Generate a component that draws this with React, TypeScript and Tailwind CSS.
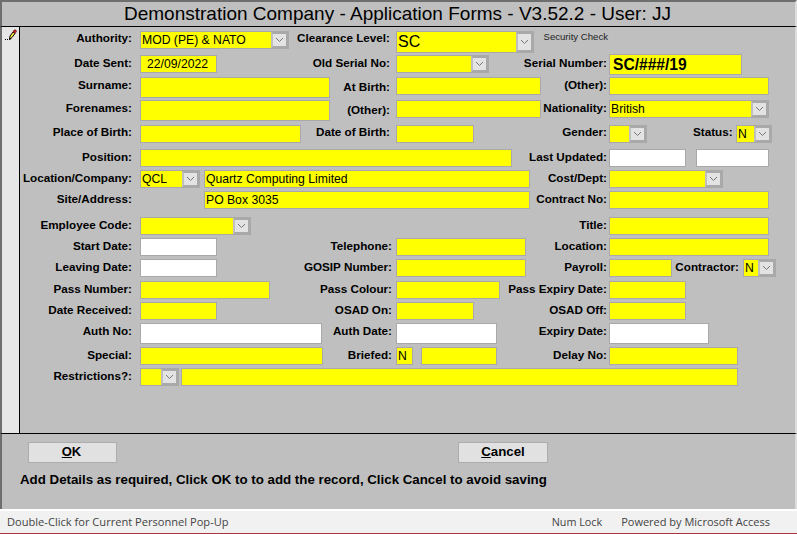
import type { ReactNode } from "react";

const font = "font-['Liberation_Sans',Arial,sans-serif]";

function Label({ children, className = "" }: { children: ReactNode; className?: string }) {
  return <div className={`whitespace-nowrap text-right text-[11.7px] leading-[14px] font-bold text-black ${className}`}>{children}</div>;
}

function Box({ className = "", white, children }: { className?: string; white?: boolean; children?: ReactNode }) {
  return (
    <div className={`shrink-0 overflow-hidden whitespace-nowrap border border-[#a9a9a9] pl-px leading-[16px] text-black ${white ? "bg-white" : "bg-[#ffff00]"} ${className}`}>
      {children}
    </div>
  );
}

function Field({ className = "", white, children }: { className?: string; white?: boolean; children?: ReactNode }) {
  return <Box white={white} className={`text-[12.2px] ${className}`}>{children}</Box>;
}

function Combo({ className = "", big, children }: { className?: string; big?: boolean; children?: ReactNode }) {
  return (
    <div className={`flex shrink-0 border border-[#a9a9a9] bg-[#ffff00] ${big ? "h-[22px]" : "h-[18px]"} ${className}`}>
      <div className={`min-w-0 flex-1 overflow-hidden whitespace-nowrap pl-px text-black ${big ? "text-[16px] leading-[19px]" : "text-[12.2px] leading-[16px]"}`}>{children}</div>
      <div className="flex w-[17px] shrink-0 items-center justify-center border-2 border-r-[#a9a9a9] border-y-[#a9a9a9] border-l-[#bfbfbf] bg-[#e3e3e3]">
        <svg width="9" height="6" viewBox="0 0 9 6" fill="none" stroke="#777" strokeWidth="1">
          <path d="M1 1l3.500 3.500L8 1" />
        </svg>
      </div>
    </div>
  );
}

function Row({ className, children }: { className: string; children: ReactNode }) {
  return <div className={`grid grid-cols-[120px_256px_213px_1fr] ${className}`}>{children}</div>;
}

// field on the left of a track, next column's label on the right
function Track({ className = "", children }: { className?: string; children: ReactNode }) {
  return <div className={`flex items-start justify-between ${className}`}>{children}</div>;
}

function Pencil() {
  return (
    <svg width="12" height="13" viewBox="0 0 12 13" className="mt-[2px] ml-[3px]">
      <rect x="0" y="10" width="1" height="1" fill="#000" />
      <rect x="2" y="10" width="1" height="1" fill="#000" />
      <path d="M4.500 10.500l.5-3.500 3-4 2 1.500-3 4z" fill="#f5e642" stroke="#000" strokeWidth="1" />
      <path d="M4 11l1-2 1.500 1z" fill="#000" />
      <path d="M8 3l1-2h2l.5 1.500-1.500 2z" fill="#d81e1e" stroke="#401010" strokeWidth=".6" />
    </svg>
  );
}

export default function App() {
  return (
    <div className={`flex h-[534px] w-[797px] flex-col overflow-hidden bg-[#bfbfbf] ${font}`}>
      <div className="flex h-[27px] shrink-0 items-center justify-center border-t-2 border-r-2 border-b border-l-2 border-t-[#6e6e6e] border-r-[#dcdcdc] border-b-black border-l-[#6e6e6e] pr-[2px] pb-px text-[19px] leading-[24px] text-black">
        Demonstration Company - Application Forms - V3.52.2 - User: JJ
      </div>
      <div className="flex h-[406px] shrink-0 border-r-2 border-l-2 border-r-[#dcdcdc] border-l-[#6e6e6e]">
        <div className="w-[18px] shrink-0 border-r border-r-black bg-[#e6e6e6]">
          <Pencil />
        </div>
        <div className="min-w-0 flex-1 pt-[4px]">
          <Row className="h-[23px]">
            <Label className="pr-[8px]">Authority:</Label>
            <Track>
              <Combo className="w-[149px]">MOD (PE) &amp; NATO</Combo>
              <Label className="pr-[6px]">Clearance Level:</Label>
            </Track>
            <Track>
              <Combo big className="w-[138px]">SC</Combo>
              <div className="pr-[1px] text-[9.6px] leading-[11px] text-[#222]">Security Check</div>
            </Track>
          </Row>
          <Row className="h-[23px]">
            <Label className="pr-[8px] pt-[2px]">Date Sent:</Label>
            <Track>
              <Field className="mt-px h-[18px] w-[77px]"><span className="ml-[5px]">22/09/2022</span></Field>
              <Label className="pr-[6px] pt-[2px]">Old Serial No:</Label>
            </Track>
            <Track>
              <Combo className="mt-px w-[93px]" />
              <Label className="pr-[2px] pt-[2px]">Serial Number:</Label>
            </Track>
            <Box className="h-[21px] w-[133px] text-[15.6px] font-bold"><span className="ml-[2px] leading-[20px]">SC/###/19</span></Box>
          </Row>
          <Row className="h-[23px]">
            <Label className="pr-[8px] pt-[1px]">Surname:</Label>
            <Track>
              <Field className="h-[21px] w-[190px]" />
              <Label className="pr-[6px] pt-[3px]">At Birth:</Label>
            </Track>
            <Track>
              <Field className="h-[18px] w-[145px]" />
              <Label className="pr-[2px] pt-[1px]">(Other):</Label>
            </Track>
            <Field className="h-[18px] w-[160px]" />
          </Row>
          <Row className="h-[25px]">
            <Label className="pr-[8px] pt-[1px]">Forenames:</Label>
            <Track>
              <Field className="h-[21px] w-[190px]" />
              <Label className="pr-[6px] pt-[3px]">(Other):</Label>
            </Track>
            <Track>
              <Field className="h-[18px] w-[145px]" />
              <Label className="pr-[2px] pt-[1px]">Nationality:</Label>
            </Track>
            <Combo className="w-[160px]">British</Combo>
          </Row>
          <Row className="h-[24px]">
            <Label className="pr-[8px]">Place of Birth:</Label>
            <Track>
              <Field className="h-[18px] w-[161px]" />
              <Label className="pr-[6px]">Date of Birth:</Label>
            </Track>
            <Track>
              <Field className="h-[18px] w-[78px]" />
              <Label className="pr-[2px]">Gender:</Label>
            </Track>
            <div className="flex items-start">
              <Combo className="w-[38px]" />
              <Label className="ml-[46px] w-[38px]">Status:</Label>
              <Combo className="ml-[5px] w-[36px]">N</Combo>
            </div>
          </Row>
          <Row className="h-[21px]">
            <Label className="pr-[8px] pt-[1px]">Position:</Label>
            <Track className="col-span-2">
              <Field className="h-[18px] w-[372px]" />
              <Label className="pr-[2px] pt-[1px]">Last Updated:</Label>
            </Track>
            <div className="flex gap-[10px]">
              <Field white className="h-[18px] w-[77px]" />
              <Field white className="h-[18px] w-[73px]" />
            </div>
          </Row>
          <Row className="h-[21px]">
            <Label className="pr-[8px] pt-[1px]">Location/Company:</Label>
            <Track className="col-span-2">
              <div className="flex gap-[4px]">
                <Combo className="w-[60px]">QCL</Combo>
                <Field className="h-[18px] w-[326px]">Quartz Computing Limited</Field>
              </div>
              <Label className="pr-[2px] pt-[1px]">Cost/Dept:</Label>
            </Track>
            <Combo className="w-[114px]" />
          </Row>
          <Row className="h-[26px]">
            <Label className="pr-[8px] pt-[1px]">Site/Address:</Label>
            <Track className="col-span-2">
              <Field className="ml-[64px] h-[18px] w-[326px]">PO Box 3035</Field>
              <Label className="pr-[2px] pt-[1px]">Contract No:</Label>
            </Track>
            <Field className="h-[18px] w-[160px]" />
          </Row>
          <Row className="h-[21px]">
            <Label className="pr-[8px] pt-[1px]">Employee Code:</Label>
            <Track className="col-span-2">
              <Combo className="w-[111px]" />
              <Label className="pr-[2px] pt-[1px]">Title:</Label>
            </Track>
            <Field className="h-[18px] w-[160px]" />
          </Row>
          <Row className="h-[21px]">
            <Label className="pr-[8px] pt-[1px]">Start Date:</Label>
            <Track>
              <Field white className="h-[18px] w-[77px]" />
              <Label className="pr-[4px] pt-[1px]">Telephone:</Label>
            </Track>
            <Track>
              <Field className="h-[18px] w-[130px]" />
              <Label className="pr-[2px] pt-[1px]">Location:</Label>
            </Track>
            <Field className="h-[18px] w-[160px]" />
          </Row>
          <Row className="h-[22px]">
            <Label className="pr-[8px] pt-[1px]">Leaving Date:</Label>
            <Track>
              <Field white className="h-[18px] w-[77px]" />
              <Label className="pr-[4px] pt-[1px]">GOSIP Number:</Label>
            </Track>
            <Track>
              <Field className="h-[18px] w-[130px]" />
              <Label className="pr-[2px] pt-[1px]">Payroll:</Label>
            </Track>
            <div className="flex items-start">
              <Field className="h-[18px] w-[63px]" />
              <Label className="ml-[2px] w-[65px] pt-[1px]">Contractor:</Label>
              <Combo className="ml-[4px] w-[33px]">N</Combo>
            </div>
          </Row>
          <Row className="h-[21px]">
            <Label className="pr-[8px] pt-[1px]">Pass Number:</Label>
            <Track>
              <Field className="h-[18px] w-[130px]" />
              <Label className="pr-[4px] pt-[1px]">Pass Colour:</Label>
            </Track>
            <Track>
              <Field className="h-[18px] w-[104px]" />
              <Label className="pr-[2px] pt-[1px]">Pass Expiry Date:</Label>
            </Track>
            <Field className="h-[18px] w-[77px]" />
          </Row>
          <Row className="h-[21px]">
            <Label className="pr-[8px] pt-[1px]">Date Received:</Label>
            <Track>
              <Field className="h-[18px] w-[77px]" />
              <Label className="pr-[4px] pt-[1px]">OSAD On:</Label>
            </Track>
            <Track>
              <Field className="h-[18px] w-[78px]" />
              <Label className="pr-[2px] pt-[1px]">OSAD Off:</Label>
            </Track>
            <Field className="h-[18px] w-[77px]" />
          </Row>
          <Row className="h-[24px]">
            <Label className="pr-[8px] pt-[1px]">Auth No:</Label>
            <Track>
              <Field white className="h-[21px] w-[182px]" />
              <Label className="pr-[4px] pt-[1px]">Auth Date:</Label>
            </Track>
            <Track>
              <Field white className="h-[21px] w-[101px]" />
              <Label className="pr-[2px] pt-[1px]">Expiry Date:</Label>
            </Track>
            <Field white className="h-[21px] w-[100px]" />
          </Row>
          <Row className="h-[21px]">
            <Label className="pr-[8px] pt-[1px]">Special:</Label>
            <Track>
              <Field className="h-[18px] w-[183px]" />
              <Label className="pr-[4px] pt-[1px]">Briefed:</Label>
            </Track>
            <Track>
              <div className="flex gap-[8px]">
                <Field className="h-[18px] w-[17px]">N</Field>
                <Field className="h-[18px] w-[76px]" />
              </div>
              <Label className="pr-[2px] pt-[1px]">Delay No:</Label>
            </Track>
            <Field className="h-[18px] w-[129px]" />
          </Row>
          <Row className="h-[21px]">
            <Label className="pr-[8px] pt-[1px]">Restrictions?:</Label>
            <div className="col-span-3 flex gap-[2px]">
              <Combo className="w-[39px]" />
              <Field className="h-[18px] w-[557px]" />
            </div>
          </Row>
        </div>
      </div>
      <div className="flex h-[76px] shrink-0 flex-col border-t border-r-2 border-l-2 border-t-black border-r-[#dcdcdc] border-l-[#6e6e6e] pt-[8px]">
        <div className="flex">
          <button className="ml-[26px] h-[21px] w-[89px] border border-[#adadad] bg-[#e1e1e1] pr-[2px] pb-[2px] text-[13px] leading-[16px] font-bold text-black">
            <span className="underline">O</span>K
          </button>
          <button className="ml-[341px] h-[21px] w-[90px] border border-[#adadad] bg-[#e1e1e1] pb-[2px] text-[13.3px] leading-[16px] font-bold text-black">
            <span className="underline">C</span>ancel
          </button>
        </div>
        <div className="mt-[9px] ml-[18px] text-[13.3px] leading-[16px] font-bold text-black">
          Add Details as required, Click OK to to add the record, Click Cancel to avoid saving
        </div>
      </div>
      <div className="flex h-[25px] shrink-0 items-center border-t-2 border-b border-t-white border-b-[#a4373a] bg-[#f1f1f1] font-['Open_Sans',sans-serif] text-[#444]">
        <div className="ml-[7px] text-[11.1px]">Double-Click for Current Personnel Pop-Up</div>
        <div className="ml-auto text-[10.8px]">Num Lock</div>
        <div className="mr-[27px] ml-[19px] text-[11px]">Powered by Microsoft Access</div>
      </div>
    </div>
  );
}
